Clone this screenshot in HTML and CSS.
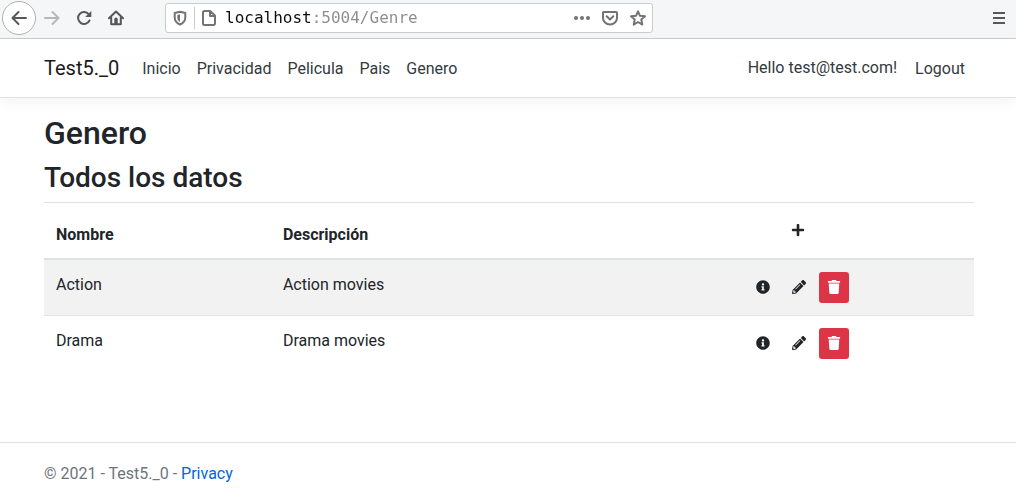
FILE: index.html
```html
<!DOCTYPE html>
<html lang="es">
<head>
<meta charset="utf-8">
<meta name="viewport" content="width=device-width, initial-scale=1">
<title>Genero - Test5._0</title>
<link rel="stylesheet" href="styles.css">
</head>
<body>
<svg class="sprite" aria-hidden="true">
  <symbol id="plus" viewBox="0 0 448 512"><path d="M416 208H272V64c0-17.67-14.33-32-32-32h-32c-17.67 0-32 14.33-32 32v144H32c-17.67 0-32 14.33-32 32v32c0 17.67 14.33 32 32 32h144v144c0 17.67 14.33 32 32 32h32c17.67 0 32-14.33 32-32V304h144c17.67 0 32-14.33 32-32v-32c0-17.67-14.33-32-32-32z"/></symbol>
  <symbol id="info" viewBox="0 0 512 512"><path d="M256 8C119.043 8 8 119.083 8 256c0 136.997 111.043 248 248 248s248-111.003 248-248C504 119.083 392.957 8 256 8zm0 110c23.196 0 42 18.804 42 42s-18.804 42-42 42-42-18.804-42-42 18.804-42 42-42zm56 254c0 6.627-5.373 12-12 12h-88c-6.627 0-12-5.373-12-12v-24c0-6.627 5.373-12 12-12h12v-64h-12c-6.627 0-12-5.373-12-12v-24c0-6.627 5.373-12 12-12h64c6.627 0 12 5.373 12 12v100h12c6.627 0 12 5.373 12 12v24z"/></symbol>
  <symbol id="pencil" viewBox="0 0 512 512"><path d="M497.9 142.1l-46.1 46.1c-4.7 4.7-12.3 4.7-17 0l-111-111c-4.7-4.7-4.7-12.3 0-17l46.1-46.1c18.7-18.7 49.1-18.7 67.9 0l60.1 60.1c18.8 18.7 18.8 49.1 0 67.9zM284.2 99.8L21.6 362.4.4 483.9c-2.9 16.4 11.4 30.6 27.8 27.8l121.5-21.3 262.6-262.6c4.7-4.7 4.7-12.3 0-17l-111-111c-4.8-4.7-12.4-4.7-17.1 0zM124.1 339.9c-5.5-5.5-5.5-14.3 0-19.8l154-154c5.5-5.5 14.3-5.5 19.8 0s5.5 14.3 0 19.8l-154 154c-5.5 5.5-14.3 5.5-19.8 0zM88 424h48v36.3l-64.5 11.3-31.1-31.1L51.7 376H88v48z"/></symbol>
  <symbol id="trash" viewBox="0 0 448 512"><path d="M432 32H312l-9.4-18.7A24 24 0 0 0 281.1 0H166.8a23.72 23.72 0 0 0-21.4 13.3L136 32H16A16 16 0 0 0 0 48v32a16 16 0 0 0 16 16h416a16 16 0 0 0 16-16V48a16 16 0 0 0-16-16zM53.2 467a48 48 0 0 0 47.9 45h245.8a48 48 0 0 0 47.9-45L416 128H32z"/></symbol>
</svg>

<div class="browser">
  <button class="tool tool-back" type="button" aria-label="Back"><svg viewBox="0 0 16 16"><path class="line" d="M15 8H2M7.500 2L1.500 8l6 6"/></svg></button>
  <button class="tool tool-off" type="button" aria-label="Forward" disabled><svg viewBox="0 0 16 16"><path class="line" d="M1 8h13M8.500 2l6 6-6 6"/></svg></button>
  <button class="tool" type="button" aria-label="Reload"><svg viewBox="0 0 16 16"><path class="line" d="M13 4.500A6 6 0 1 0 13.500 10.500"/><path d="M15.300 1v5.500a.6.6 0 0 1-.6.6H9.200z"/></svg></button>
  <button class="tool" type="button" aria-label="Home"><svg viewBox="0 0 16 16"><path class="line" d="M1 8.300L8 1.500l7 6.800M3.200 7.500v6.700h9.600V7.500"/><path d="M6.300 9.200a1.700 1.700 0 0 1 3.400 0V15H6.300z"/></svg></button>
  <div class="address">
    <svg class="address-icon" viewBox="0 0 16 16" aria-hidden="true"><path class="line" d="M8 1.700L13.300 3v4.500c0 3.200-2 5.600-5.300 7-3.300-1.400-5.300-3.800-5.300-7V3z"/><path d="M8 4.300v7.700C6.300 11 5.300 9.500 5.300 7.500V5z"/></svg>
    <span class="divider"></span>
    <svg class="address-icon" viewBox="0 0 16 16" aria-hidden="true"><path class="line" d="M3.500 1h5.700L14 5.700v7.800a1.500 1.500 0 0 1-1.500 1.500h-9A1.500 1.500 0 0 1 2 13.500v-11A1.500 1.500 0 0 1 3.500 1zM9 1.500V6h4.500"/></svg>
    <input class="url" type="text" aria-label="Address" value="localhost:5004/Genre" spellcheck="false">
    <button class="mini" type="button" aria-label="Page actions"><svg viewBox="0 0 16 16"><circle cx="2" cy="8" r="2"/><circle cx="8" cy="8" r="2"/><circle cx="14" cy="8" r="2"/></svg></button>
    <button class="mini" type="button" aria-label="Save to Pocket"><svg viewBox="0 0 16 16"><path class="line" d="M1.800 2h12.400a.8.8 0 0 1 .8.8V8A7 6.500 0 0 1 1 8V2.800a.8.8 0 0 1 .8-.8zM4.700 6.300L8 9.500l3.300-3.200"/></svg></button>
    <button class="mini" type="button" aria-label="Bookmark"><svg viewBox="0 0 16 16"><path class="line" d="M8 1.300l2 4.500 5 .5-3.700 3.300 1 5L8 12l-4.300 2.600 1-5L1 6.300l5-.5z"/></svg></button>
  </div>
  <button class="tool tool-menu" type="button" aria-label="Menu"><svg viewBox="0 0 16 16"><path class="line" d="M2 3h12M2 8h12M2 13h12"/></svg></button>
</div>

<header class="site-header">
  <nav class="container navbar">
    <a class="brand" href="#">Test5._0</a>
    <a class="nav-link" href="#">Inicio</a>
    <a class="nav-link" href="#">Privacidad</a>
    <a class="nav-link" href="#">Pelicula</a>
    <a class="nav-link" href="#">Pais</a>
    <a class="nav-link" href="#">Genero</a>
    <a class="nav-link nav-user" href="#">Hello test@test.com!</a>
    <button class="nav-link" type="button">Logout</button>
  </nav>
</header>

<main class="container content">
  <h2>Genero</h2>
  <h3>Todos los datos</h3>
  <table class="table">
    <colgroup><col class="col-name"><col class="col-description"><col></colgroup>
    <thead>
      <tr>
        <th scope="col">Nombre</th>
        <th scope="col">Descripción</th>
        <th scope="col"><div class="actions actions-add"><button class="btn" type="button" aria-label="Agregar"><svg><use href="#plus"/></svg></button></div></th>
      </tr>
    </thead>
    <tbody>
      <tr>
        <td>Action</td>
        <td>Action movies</td>
        <td><div class="actions">
          <button class="btn btn-info" type="button" aria-label="Detalles de Action"><svg><use href="#info"/></svg></button>
          <button class="btn" type="button" aria-label="Editar Action"><svg><use href="#pencil"/></svg></button>
          <button class="btn btn-danger" type="button" aria-label="Eliminar Action"><svg><use href="#trash"/></svg></button>
        </div></td>
      </tr>
      <tr>
        <td>Drama</td>
        <td>Drama movies</td>
        <td><div class="actions">
          <button class="btn btn-info" type="button" aria-label="Detalles de Drama"><svg><use href="#info"/></svg></button>
          <button class="btn" type="button" aria-label="Editar Drama"><svg><use href="#pencil"/></svg></button>
          <button class="btn btn-danger" type="button" aria-label="Eliminar Drama"><svg><use href="#trash"/></svg></button>
        </div></td>
      </tr>
    </tbody>
  </table>
</main>

<footer class="site-footer">
  <div class="container">© 2021 - Test5._0 - <a href="#">Privacy</a></div>
</footer>
</body>
</html>
```

FILE: styles.css
```css
*, *::before, *::after { box-sizing: border-box; }

body {
  margin: 0;
  min-height: 100vh;
  display: flex;
  flex-direction: column;
  background: #fff;
  color: #212529;
  font: 16px/24px Roboto, "Liberation Sans", sans-serif;
}

button {
  margin: 0;
  border: 0;
  padding: 0;
  background: transparent;
  color: inherit;
  font: inherit;
}

a { text-decoration: none; }
svg { display: block; fill: currentColor; }
.sprite { position: absolute; width: 0; height: 0; }

.line {
  fill: none;
  stroke: currentColor;
  stroke-width: 2;
  stroke-linecap: round;
  stroke-linejoin: round;
}

/* Browser toolbar */
.browser {
  display: flex;
  align-items: center;
  height: 39px;
  padding: 0 8px 3px 2px;
  border-bottom: 1px solid #ccc;
  background: #f5f6f7;
  color: #58585b;
}

.tool {
  display: flex;
  align-items: center;
  justify-content: center;
  flex: none;
  width: 32px;
  height: 32px;
}

.tool svg, .mini svg, .address-icon { width: 16px; height: 16px; }

.tool-back {
  width: 34px;
  height: 34px;
  border: 1px solid #b1b1b3;
  border-radius: 50%;
  background: #fff;
}

.tool-off { color: #b5b6b8; }
.tool-menu { width: 18px; margin-left: auto; }
.tool-menu .line { stroke-linecap: butt; }

.address {
  display: flex;
  align-items: center;
  flex: 0 1 488px;
  min-width: 0;
  height: 30px;
  margin-left: 33px;
  padding: 0 6px;
  border: 1px solid #ccc;
  border-radius: 3px;
  background: #fff;
  color: #737373;
}

.address-icon { flex: none; }
.divider { width: 1px; height: 22px; margin: 0 6px; background: #ccc; }

.url {
  flex: 1;
  min-width: 0;
  height: 24px;
  margin-left: 8px;
  border: 0;
  padding: 0;
  background: linear-gradient(90deg, #0c0c0d 9ch, #8c8c90 9ch);
  background-clip: text;
  -webkit-background-clip: text;
  color: transparent;
  font: 16px/24px "DejaVu Sans Mono", "Liberation Mono", monospace;
}

.mini {
  display: flex;
  align-items: center;
  justify-content: center;
  flex: none;
  width: 28px;
  height: 28px;
}

.mini:last-child { margin-right: -6px; }

/* Page */
.container {
  width: 100%;
  max-width: 960px;
  margin: 0 auto;
  padding: 0 14px 0 16px;
}

.site-header {
  padding: 8px 0;
  border-bottom: 1px solid #dee2e6;
  box-shadow: 0 4px 12px rgba(0, 0, 0, .05);
}

.navbar { display: flex; align-items: center; padding-right: 15px; }

.brand {
  margin-right: 15px;
  padding: 6px 0;
  color: #1a1a1a;
  font-size: 20px;
  line-height: 30px;
}

.nav-link { padding: 9px 8px 7px; color: #343a40; }
.nav-user { margin-left: auto; padding: 8px 10px 8px 8px; }

.content { padding-top: 16px; padding-bottom: 16px; }

h2, h3 { margin: 0 0 8px; font-weight: 500; }
h2 { font-size: 32px; line-height: 38px; }
h3 { margin-bottom: 6px; font-size: 28px; line-height: 36px; }

.table {
  width: 100%;
  table-layout: fixed;
  border-collapse: separate;
  border-spacing: 0;
}

.col-name { width: 24.4%; }
.col-description { width: 50%; }

th, td {
  padding: 12px;
  border-top: 1px solid #dee2e6;
  text-align: left;
}

td {
  vertical-align: top;
  line-height: 26px;
}

th {
  border-bottom: 2px solid #dee2e6;
  vertical-align: bottom;
  font-weight: 700;
  line-height: 22px;
}

tbody tr:first-child td { border-top: 0; }
tbody tr:nth-child(odd) { background: #f2f2f2; }

.actions { display: flex; gap: 5px; width: 101px; }
.actions-add { justify-content: center; }

.btn {
  display: flex;
  align-items: center;
  justify-content: center;
  flex: none;
  width: 30px;
  height: 31px;
  padding-bottom: 2px;
  border-radius: 3px;
}

.btn svg { width: 14px; height: 14px; }
.btn-info { width: 31px; }
.btn-danger { background: #dc3545; color: #fff; }

.site-footer {
  margin-top: auto;
  padding: 19px 0 5px;
  border-top: 1px solid #dee2e6;
  color: #6c757d;
}

.site-footer a { color: #0366d6; }
```
